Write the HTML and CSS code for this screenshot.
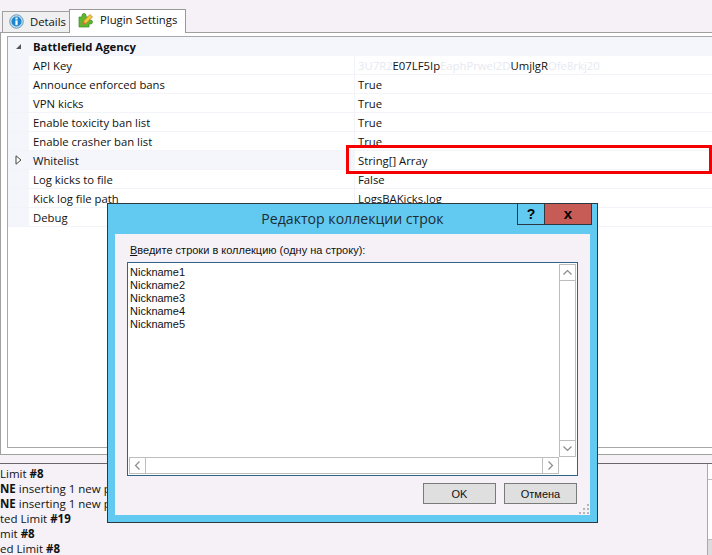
FILE: index.html
```html
<!DOCTYPE html>
<html lang="en">
<head>
<meta charset="utf-8">
<title>Plugin Settings</title>
<link rel="stylesheet" href="styles.css">
</head>
<body>
<div class="app">
  <div class="tabs">
    <div class="tab tab-details">
      <svg class="tab-icon" width="15" height="15" viewBox="0 0 15 15"><circle cx="7.500" cy="7.500" r="6.800" fill="#bcd9ea" stroke="#5b8fb0" stroke-width=".8"/><circle cx="7.500" cy="7.500" r="5" fill="#1b86cf"/><rect x="6.400" y="6.400" width="2.200" height="4.800" fill="#fff"/><rect x="6.400" y="3.500" width="2.200" height="2" fill="#fff"/></svg>
      <span>Details</span>
    </div>
    <div class="tab tab-active">
      <svg class="tab-icon" width="16" height="16" viewBox="0 0 16 16"><path d="M1 5h3V3.500a2 2 0 0 1 4 0V5h3v3h1.500a2 2 0 0 1 0 4H11v3H1z" fill="#5cb82e" stroke="#3c8a1c" stroke-width=".7"/><path d="M4.500 12.500l1-3.500 6.500-6.500 2.500 2.500-6.500 6.500z" fill="#f4c93f" stroke="#b27a1d" stroke-width=".7"/><path d="M4.500 12.500l1-3.500 2.500 2.500z" fill="#e8694a"/></svg>
      <span>Plugin Settings</span>
    </div>
  </div>
  <div class="panel">
    <div class="grid">
      <div class="row row-cat"><div class="gutter"><svg width="7" height="7" viewBox="0 0 7 7"><path d="M6 1v5H1z" fill="#555"/></svg></div><div class="name">Battlefield Agency</div></div>
      <div class="row"><div class="gutter"></div><div class="name">API Key</div><div class="value value-key"><span class="faint">3U7R2</span>E07LF5Ip<span class="faint">EaphPrwel2D</span>UmjlgR<span class="faint">Ofe8rkj20</span></div></div>
      <div class="row"><div class="gutter"></div><div class="name">Announce enforced bans</div><div class="value">True</div></div>
      <div class="row"><div class="gutter"></div><div class="name">VPN kicks</div><div class="value">True</div></div>
      <div class="row"><div class="gutter"></div><div class="name">Enable toxicity ban list</div><div class="value">True</div></div>
      <div class="row"><div class="gutter"></div><div class="name">Enable crasher ban list</div><div class="value">True</div></div>
      <div class="row row-sel"><div class="gutter"><svg width="7" height="10" viewBox="0 0 7 10"><path d="M1 .8v8.400L6 5z" fill="#fff" stroke="#444"/></svg></div><div class="name">Whitelist</div><div class="value">String[] Array</div></div>
      <div class="row"><div class="gutter"></div><div class="name">Log kicks to file</div><div class="value">False</div></div>
      <div class="row"><div class="gutter"></div><div class="name">Kick log file path</div><div class="value">LogsBAKicks.log</div></div>
      <div class="row"><div class="gutter"></div><div class="name">Debug</div><div class="value"></div></div>
    </div>
  </div>
  <div class="log">
    <div class="log-text">
      <div class="log-line">Limit <b>#8</b></div>
      <div class="log-line"><b>NE</b> inserting 1 new p</div>
      <div class="log-line"><b>NE</b> inserting 1 new p</div>
      <div class="log-line">ted Limit <b>#19</b></div>
      <div class="log-line">mit <b>#8</b></div>
      <div class="log-line">ed Limit <b>#8</b></div>
    </div>
    <div class="log-scroll"><div class="log-scroll-btn"></div><div class="log-scroll-thumb"></div></div>
  </div>
  <div class="highlight"></div>
  <div class="dialog">
    <div class="titlebar">
      <div class="title">Редактор коллекции строк</div>
      <div class="win-buttons">
        <div class="win-btn win-help">?</div>
        <div class="win-btn win-close">x</div>
      </div>
    </div>
    <div class="client">
      <div class="prompt"><u>В</u>ведите строки в коллекцию (одну на строку):</div>
      <div class="editor">
        <div class="editor-main">
          <div class="editor-text">Nickname1<br>Nickname2<br>Nickname3<br>Nickname4<br>Nickname5</div>
          <div class="vscroll">
            <div class="sb-btn"><svg width="11" height="7" viewBox="0 0 11 7"><path d="M1.500 5.500l4-4 4 4" fill="none" stroke="#8a8a8a" stroke-width="1.200"/></svg></div>
            <div class="sb-track"></div>
            <div class="sb-btn"><svg width="11" height="7" viewBox="0 0 11 7"><path d="M1.500 1.500l4 4 4-4" fill="none" stroke="#8a8a8a" stroke-width="1.200"/></svg></div>
          </div>
        </div>
        <div class="hscroll">
          <div class="sb-btn"><svg width="7" height="11" viewBox="0 0 7 11"><path d="M5.500 1.500l-4 4 4 4" fill="none" stroke="#8a8a8a" stroke-width="1.200"/></svg></div>
          <div class="sb-track"></div>
          <div class="sb-btn"><svg width="7" height="11" viewBox="0 0 7 11"><path d="M1.500 1.500l4 4-4 4" fill="none" stroke="#8a8a8a" stroke-width="1.200"/></svg></div>
          <div class="sb-corner"></div>
        </div>
      </div>
      <div class="actions">
        <div class="btn">OK</div>
        <div class="btn">Отмена</div>
      </div>
      <svg class="grip" width="10" height="10" viewBox="0 0 10 10"><g fill="#b5b5b5"><rect x="8" y="0" width="2" height="2"/><rect x="4" y="4" width="2" height="2"/><rect x="8" y="4" width="2" height="2"/><rect x="0" y="8" width="2" height="2"/><rect x="4" y="8" width="2" height="2"/><rect x="8" y="8" width="2" height="2"/></g></svg>
    </div>
  </div>
</div>
</body>
</html>
```
FILE: styles.css
```css
* { box-sizing: border-box; }
html, body { margin: 0; padding: 0; }
body { width: 712px; height: 555px; overflow: hidden; background: #f5f1f6; }
.app { position: relative; width: 712px; height: 555px; overflow: hidden; display: flex; flex-direction: column; font-family: "Open Sans", "Noto Sans", sans-serif; font-size: 11.3px; color: #111; }
.tabs { height: 32px; flex: none; display: flex; align-items: flex-end; padding-left: 2px; position: relative; z-index: 1; }
.tab { display: flex; align-items: center; gap: 6px; border: 1px solid #a0a0a0; border-bottom: 0; }
.tab-details { height: 21px; width: 68px; padding-left: 6px; padding-bottom: 2px; background: #f0f0f0; margin-right: -1px; }
.tab-active { height: 24px; margin-bottom: -1px; width: 117px; padding-left: 8px; padding-bottom: 4px; background: #fff; border-color: #999; }
.tab-icon { flex: none; }
.panel { height: 423px; flex: none; background: #fff; border: 1px solid #a0a0a0; border-width: 1px 0 1px 1px; padding: 3px 0 6px 6px; }
.grid { height: 100%; border: 1px solid #a8a8a8; border-width: 1px 0 1px 1px; }
.row { height: 19px; display: flex; align-items: center; background: #fff; border-bottom: 1px solid #f3f4fa; }
.gutter { width: 21px; flex: none; align-self: stretch; background: #f5f6fc; display: flex; align-items: center; justify-content: center; padding-right: 1px; }
.name { width: 326px; flex: none; padding-left: 4px; border-right: 1px solid #f3f4fa; align-self: stretch; display: flex; align-items: center; }
.value { padding-left: 3px; flex: 1; }
.row-cat { background: #f5f6fc; font-weight: 700; border-bottom: 0; }
.row-cat .name { border-right: 0; }
.row-sel, .row-sel .name { background: #f5f6fc; }
.row-sel .value { background: #fff; align-self: stretch; display: flex; align-items: center; }
.faint { color: #e6e9f1; }
.log { flex: 1; display: flex; border-top: 1px solid #696969; margin-top: 8px; }
.log-text { flex: 1; padding-top: 2px; overflow: hidden; font-size: 11.5px; }
.log-line { height: 15px; line-height: 15px; white-space: nowrap; }
.log-scroll { width: 5px; flex: none; background: #fff; border-left: 1px solid #aaa; display: flex; flex-direction: column; justify-content: space-between; }
.log-scroll-btn { height: 16px; border-bottom: 1px solid #bdbdbd; }
.log-scroll-thumb { height: 17px; background: #dcdcdc; border-top: 1px solid #bdbdbd; }
.highlight { position: absolute; left: 346px; top: 145px; width: 366px; height: 29px; border: 3px solid #f40000; }
.dialog { position: absolute; left: 107px; top: 203px; width: 491px; height: 320px; background: #62c9f0; border: 1px solid #2b3a42; padding: 0 7px 7px; display: flex; flex-direction: column; }
.titlebar { height: 30px; flex: none; display: flex; justify-content: center; align-items: center; position: relative; }
.title { font-size: 14.100px; color: #1d2b33; padding-bottom: 1px; }
.win-buttons { position: absolute; right: -2px; top: 0; height: 21px; display: flex; border: 1px solid #2b3a42; border-top: 0; }
.win-btn { display: flex; align-items: center; justify-content: center; font-weight: 700; font-family: "Liberation Sans", sans-serif; color: #000; }
.win-help { width: 27px; font-size: 14px; border-right: 1px solid #2b3a42; }
.win-close { width: 46px; background: #c75b55; font-size: 15px; padding-bottom: 2px; }
.client { flex: 1; background: #f5f1f6; padding: 9px 12px 0; position: relative; display: flex; flex-direction: column; font-family: "Liberation Sans", sans-serif; font-size: 11px; color: #111; }
.prompt { height: 19px; line-height: 15px; padding-left: 3px; }
.editor { height: 214px; flex: none; background: #fff; border: 1px solid #2f6487; display: flex; flex-direction: column; padding: 1px; }
.editor-main { flex: 1; display: flex; min-height: 0; }
.editor-text { flex: 1; padding: 2px 0 0 1px; line-height: 13px; }
.vscroll { width: 17px; flex: none; display: flex; flex-direction: column; }
.hscroll { height: 17px; flex: none; display: flex; }
.sb-btn { width: 17px; height: 17px; flex: none; background: #fff; border: 1px solid #bdbdbd; display: flex; align-items: center; justify-content: center; }
.sb-track { flex: 1; background: #fff; }
.vscroll .sb-track { border-left: 1px solid #bdbdbd; border-right: 1px solid #bdbdbd; }
.hscroll .sb-track { border-top: 1px solid #bdbdbd; border-bottom: 1px solid #bdbdbd; }
.sb-corner { width: 17px; flex: none; }
.actions { display: flex; justify-content: flex-end; gap: 8px; margin-top: 7px; padding-right: 1px; }
.btn { width: 73px; height: 21px; background: #dfdfdf; border: 1px solid #7a7a7a; display: flex; align-items: center; justify-content: center; }
.grip { position: absolute; right: 1px; bottom: 1px; }
```
